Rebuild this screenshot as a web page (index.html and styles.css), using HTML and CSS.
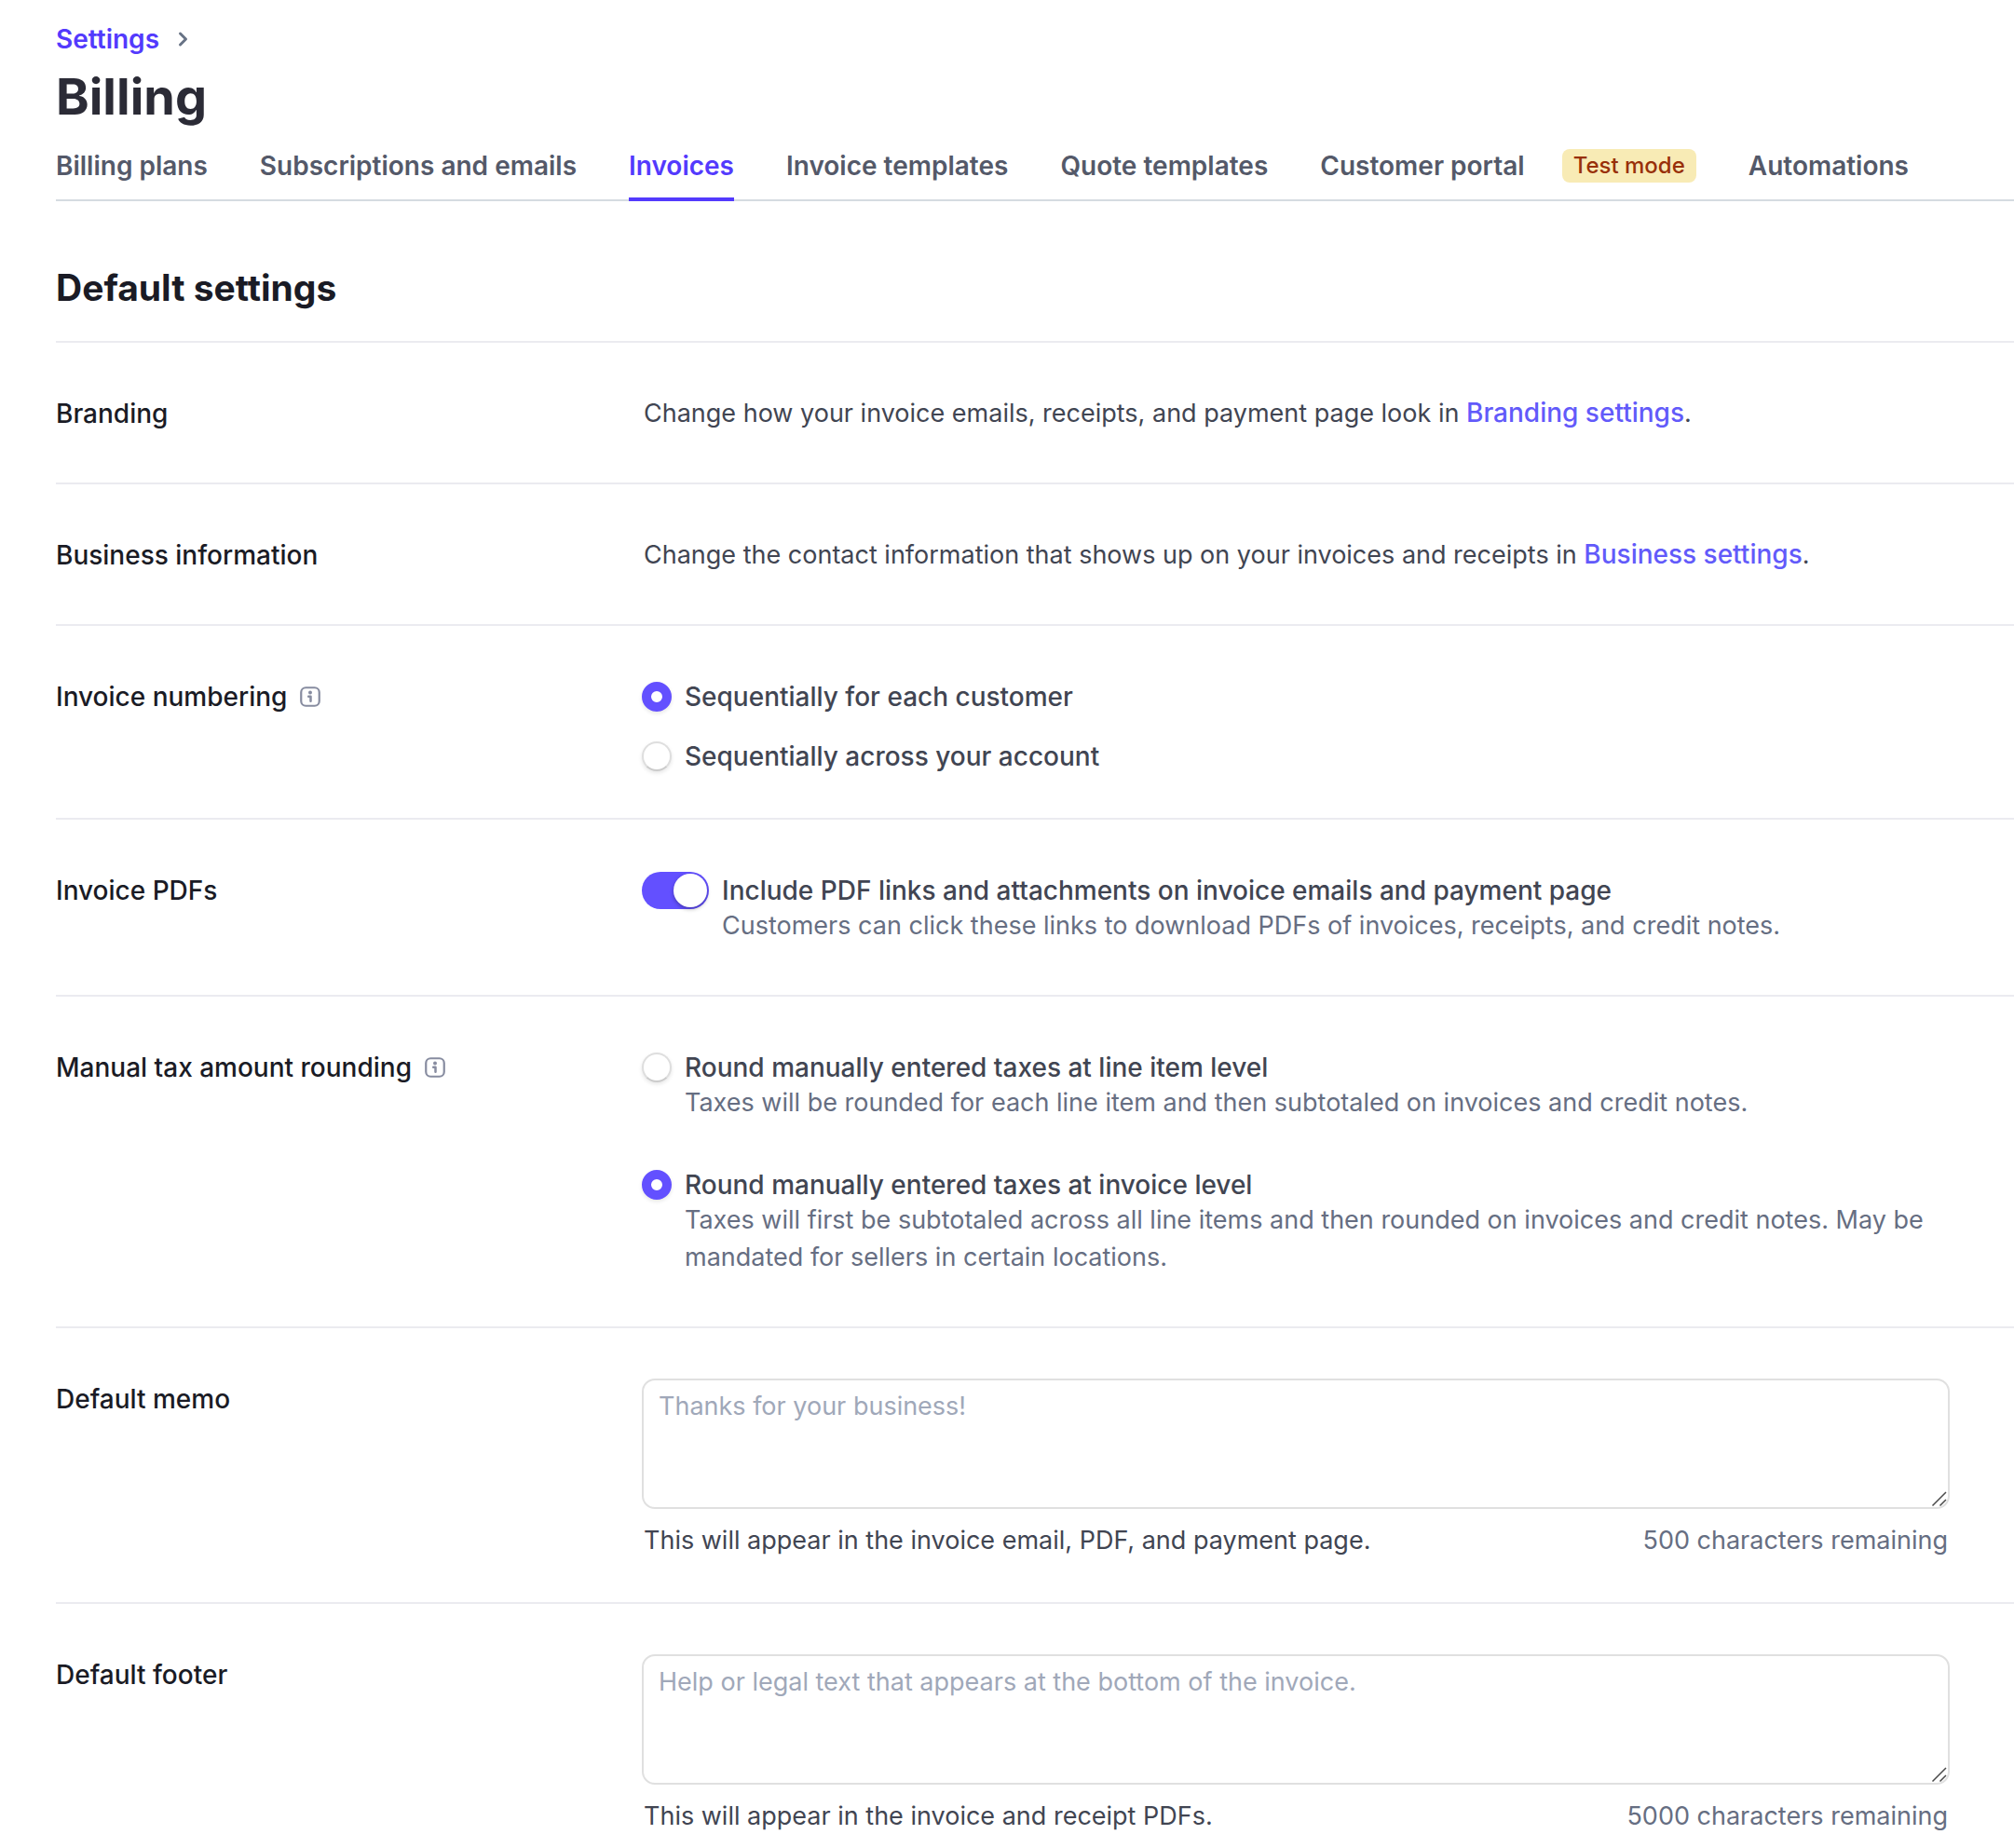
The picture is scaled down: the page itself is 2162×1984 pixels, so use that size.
FILE: index.html
```html
<!DOCTYPE html>
<html lang="en">
<head>
<meta charset="utf-8">
<title>Billing settings</title>
<link rel="stylesheet" href="styles.css">
</head>
<body>
<header class="page-header">
  <nav class="breadcrumb" aria-label="Breadcrumb">
    <a href="#settings">Settings</a>
    <svg class="chevron" width="12" height="18" viewBox="0 0 12 18" fill="none" stroke="#687385" stroke-width="3" stroke-linecap="round" stroke-linejoin="round" aria-hidden="true"><path d="M2.500 3l6 6-6 6"/></svg>
  </nav>
  <h1>Billing</h1>
  <nav class="tabs" aria-label="Billing sections">
    <a class="tab" href="#plans">Billing plans</a>
    <a class="tab" href="#subscriptions">Subscriptions and emails</a>
    <a class="tab active" href="#invoices" aria-current="page">Invoices</a>
    <a class="tab" href="#invoice-templates">Invoice templates</a>
    <a class="tab" href="#quote-templates">Quote templates</a>
    <a class="tab" href="#portal">Customer portal <span class="badge">Test mode</span></a>
    <a class="tab" href="#automations">Automations</a>
  </nav>
</header>
<main class="settings">
  <h2>Default settings</h2>

  <section class="row">
    <h3 class="label">Branding</h3>
    <p class="text">Change how your invoice emails, receipts, and payment page look in <a href="#branding">Branding settings</a>.</p>
  </section>

  <section class="row">
    <h3 class="label">Business information</h3>
    <p class="text">Change the contact information that shows up on your invoices and receipts in <a href="#business">Business settings</a>.</p>
  </section>

  <section class="row">
    <h3 class="label" id="numbering">Invoice numbering
      <svg class="info" width="22" height="22" viewBox="0 0 22 22" fill="none" stroke="#878ca0" aria-hidden="true"><rect x="1.250" y="1.250" width="19.500" height="19.500" rx="5" stroke-width="2.200"/><circle cx="11" cy="6.600" r="2" fill="#878ca0" stroke="none"/><path d="M9.200 10.800h2.300v5" stroke-width="2.500" stroke-linecap="round" stroke-linejoin="round"/></svg>
    </h3>
    <div class="options" role="radiogroup" aria-labelledby="numbering">
      <label class="option"><input class="radio" type="radio" name="numbering" checked><span class="title">Sequentially for each customer</span></label>
      <label class="option"><input class="radio" type="radio" name="numbering"><span class="title">Sequentially across your account</span></label>
    </div>
  </section>

  <section class="row">
    <h3 class="label">Invoice PDFs</h3>
    <div class="options described">
      <label class="option">
        <input class="switch" type="checkbox" role="switch" checked>
        <span class="copy"><span class="title">Include PDF links and attachments on invoice emails and payment page</span>
        <span class="hint">Customers can click these links to download PDFs of invoices, receipts, and credit notes.</span></span>
      </label>
    </div>
  </section>

  <section class="row">
    <h3 class="label" id="rounding">Manual tax amount rounding
      <svg class="info" width="22" height="22" viewBox="0 0 22 22" fill="none" stroke="#878ca0" aria-hidden="true"><rect x="1.250" y="1.250" width="19.500" height="19.500" rx="5" stroke-width="2.200"/><circle cx="11" cy="6.600" r="2" fill="#878ca0" stroke="none"/><path d="M9.200 10.800h2.300v5" stroke-width="2.500" stroke-linecap="round" stroke-linejoin="round"/></svg>
    </h3>
    <div class="options described" role="radiogroup" aria-labelledby="rounding">
      <label class="option">
        <input class="radio" type="radio" name="rounding">
        <span class="copy"><span class="title">Round manually entered taxes at line item level</span>
        <span class="hint">Taxes will be rounded for each line item and then subtotaled on invoices and credit notes.</span></span>
      </label>
      <label class="option">
        <input class="radio" type="radio" name="rounding" checked>
        <span class="copy"><span class="title">Round manually entered taxes at invoice level</span>
        <span class="hint">Taxes will first be subtotaled across all line items and then rounded on invoices and credit notes. May be mandated for sellers in certain locations.</span></span>
      </label>
    </div>
  </section>

  <section class="row">
    <label class="label" for="memo">Default memo</label>
    <div class="field">
      <div class="textbox">
        <textarea id="memo" placeholder="Thanks for your business!"></textarea>
        <svg class="grip" width="20" height="20" viewBox="0 0 20 20" fill="none" stroke="#4a4a4a" stroke-width="1.500" aria-hidden="true"><path d="M3.500 18.500l14.500-14.500M11.500 18.500l6.500-6.500"/></svg>
      </div>
      <div class="field-notes"><span>This will appear in the invoice email, PDF, and payment page.</span><span class="count">500 characters remaining</span></div>
    </div>
  </section>

  <section class="row">
    <label class="label" for="footer">Default footer</label>
    <div class="field">
      <div class="textbox">
        <textarea id="footer" placeholder="Help or legal text that appears at the bottom of the invoice."></textarea>
        <svg class="grip" width="20" height="20" viewBox="0 0 20 20" fill="none" stroke="#4a4a4a" stroke-width="1.500" aria-hidden="true"><path d="M3.500 18.500l14.500-14.500M11.500 18.500l6.500-6.500"/></svg>
      </div>
      <div class="field-notes"><span>This will appear in the invoice and receipt PDFs.</span><span class="count">5000 characters remaining</span></div>
    </div>
  </section>
</main>
</body>
</html>
```
FILE: styles.css
```css
* {
  box-sizing: border-box;
}

body {
  margin: 0;
  padding-left: 60px;
  background: #fff;
  color: #414552;
  font-family: Inter, "Liberation Sans", sans-serif;
  font-size: 27px;
  line-height: 40px;
}

h1, h2, h3, p {
  margin: 0;
}

a {
  color: #533afd;
  font-size: 28px;
  font-weight: 600;
  text-decoration: none;
}

.breadcrumb {
  display: flex;
  align-items: center;
  gap: 20px;
  padding-top: 22px;
}

h1 {
  color: #2b2b36;
  font-size: 54px;
  font-weight: 700;
  line-height: 68px;
  padding-top: 8px;
}

.tabs {
  display: flex;
  gap: 56px;
  padding-top: 20px;
  box-shadow: inset 0 -2px #d5dbe1;
  white-space: nowrap;
}

.tab {
  display: flex;
  align-items: center;
  height: 58px;
  padding-bottom: 18px;
  color: #545969;
}

.tab.active {
  color: #533afd;
  box-shadow: inset 0 -4px #533afd;
}

.badge {
  margin-left: 40px;
  padding: 0 12px;
  border-radius: 8px;
  background: #f8ebb5;
  color: #983009;
  font-size: 24px;
  font-weight: 500;
  line-height: 36px;
}

h2 {
  padding: 68px 0 32px;
  color: #1a1b25;
  font-size: 39px;
  font-weight: 700;
  line-height: 50px;
}

.row {
  display: grid;
  grid-template-columns: 629px minmax(0, 1fr);
  padding: 54px 69px 46px 0;
  border-top: 2px solid #ebebf0;
}

.row:last-child {
  padding-bottom: 0;
}

.label {
  display: flex;
  align-items: center;
  align-self: start;
  gap: 14px;
  padding-top: 2px;
  color: #1a1b25;
  font-size: 28px;
  font-weight: 500;
}

.text {
  padding: 2px 0 8px 2px;
}

.text a {
  color: #625afa;
  font-weight: 500;
  line-height: 28px;
}

.options {
  display: grid;
  gap: 24px;
  padding-top: 2px;
}

.options.described {
  gap: 48px;
  padding-bottom: 8px;
}

.option {
  display: flex;
  align-items: flex-start;
  gap: 14px;
}

.copy {
  display: grid;
}

.title {
  font-size: 28px;
  font-weight: 500;
}

.hint {
  margin-top: -2px;
  color: #666e82;
}

.radio {
  appearance: none;
  flex: none;
  width: 32px;
  height: 32px;
  margin: 4px 0;
  border: 2px solid #dedede;
  border-bottom-color: #cbcbcb;
  border-radius: 50%;
  background: #fff;
  box-shadow: 0 2px 4px rgb(0 0 0 / 10%);
}

.radio:checked {
  border: 10px solid #6350ff;
}

.switch {
  appearance: none;
  display: flex;
  flex: none;
  justify-content: flex-end;
  width: 72px;
  height: 40px;
  margin: 0;
  padding: 2px;
  border-radius: 20px;
  background: #6350ff;
}

.switch::before {
  content: "";
  width: 36px;
  height: 36px;
  border-radius: 50%;
  background: #fff;
  box-shadow: 0 2px 4px rgb(0 0 0 / 30%);
}

.textbox {
  position: relative;
}

textarea {
  display: block;
  width: 100%;
  height: 140px;
  padding: 8px 16px;
  border: 2px solid #e0e0e0;
  border-radius: 14px;
  background: #fff;
  color: #414552;
  font: inherit;
  resize: vertical;
}

textarea::-webkit-resizer {
  background: transparent;
}

textarea::placeholder {
  color: #a0a8b9;
}

.grip {
  position: absolute;
  right: 2px;
  bottom: 2px;
  pointer-events: none;
}

.field-notes {
  display: flex;
  justify-content: space-between;
  padding: 14px 2px 0;
}

.count {
  color: #666e82;
}
```
